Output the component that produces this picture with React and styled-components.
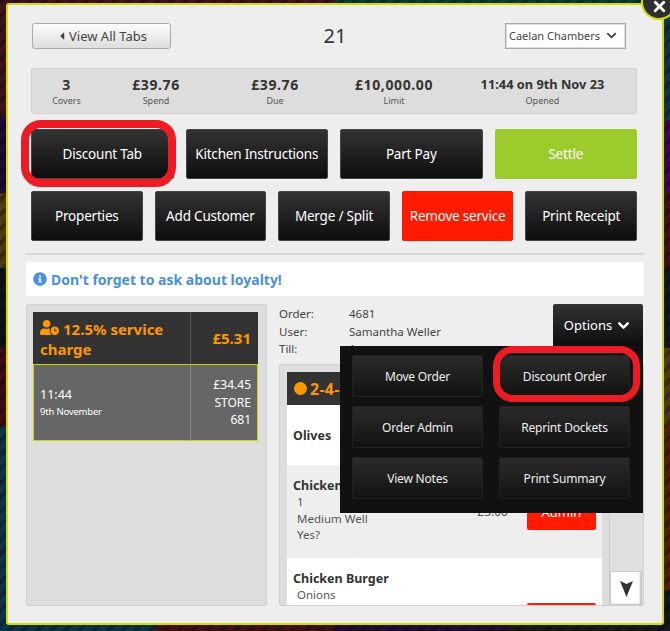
import React from "react";
import styled, { createGlobalStyle } from "styled-components";
import { ChevronDown, X } from "lucide-react";
import { FaUserClock, FaInfoCircle, FaCaretLeft } from "react-icons/fa";

const Global = createGlobalStyle`
  html, body { margin: 0; padding: 0; background: #111; }
  * { box-sizing: border-box; }
  body { font-family: "Noto Sans", "Liberation Sans", sans-serif; color: #444; }
`;

const Page = styled.div`
  width: 670px;
  height: 631px;
  overflow: hidden;
  padding: 3px 6px 6px 6px;
  background-color: #111;
  background-image:
    repeating-linear-gradient(135deg, rgba(0,0,0,.28) 0 4px, transparent 4px 10px),
    linear-gradient(to right, #3e1216 0 335px, #0e3a2a 335px),
    linear-gradient(to right, #0c3444 0 155px, #3e1014 155px 335px, #200c36 335px 510px, #181818 510px),
    linear-gradient(to bottom, #3e1216 0 117px, #1e0a34 117px 193px, #4c3a10 193px 268px, #111 268px 348px, #3e0c10 348px 427px, #0c3444 427px),
    linear-gradient(to bottom, #0e3a2e 0 120px, #3a0c40 120px 193px, #3a1414 193px 268px, #161616 268px 348px, #4c3c0c 348px 425px, #4a2008 425px 590px, #161616 590px);
  background-size: 100% 100%, 100% 4px, 100% 7px, 7px 100%, 7px 100%;
  background-position: 0 0, 0 0, 0 100%, 0 0, 100% 0;
  background-repeat: no-repeat;
`;

const Modal = styled.div`
  position: relative;
  height: 622px;
  background: #eee;
  border: 2px solid #d4dc00;
  border-radius: 3px;
  padding: 17px 18px 17px 18px;
`;

const Close = styled.div`
  position: absolute;
  top: -21px;
  right: -15px;
  width: 36px;
  height: 36px;
  border-radius: 50%;
  background: #2e2e2e;
  border: 2px solid #d4dc00;
  color: #fff;
  display: flex;
  align-items: center;
  justify-content: center;
  padding-top: 9px;
`;

const Inset = styled.div`
  padding: 0 7px 0 5px;
`;

const Header = styled.div`
  display: grid;
  grid-template-columns: 139px 1fr 121px;
  align-items: center;
  height: 26px;
  padding-left: 1px;
  padding-right: 11px;
`;

const BackButton = styled.div`
  height: 26px;
  border: 1px solid #aaa;
  border-radius: 3px;
  background: linear-gradient(#fdfdfd, #ddd);
  display: flex;
  align-items: center;
  justify-content: center;
  font-size: 13px;
  color: #444;
  gap: 1px;
`;

const TabNumber = styled.div`
  text-align: center;
  font-size: 20px;
  color: #333;
  padding-right: 6px;
`;

const CustomerSelect = styled.div`
  height: 26px;
  background: #fff;
  border: 1px solid #aaa;
  outline: 1px solid #ddd;
  outline-offset: -2px;
  display: flex;
  align-items: center;
  justify-content: space-between;
  padding: 0 6px 0 3px;
  font-size: 11px;
  white-space: nowrap;
  color: #444;
`;

const Stats = styled.div`
  margin-top: 20px;
  height: 46px;
  background: #ddd;
  border: 1px solid #d2d2d2;
  border-radius: 2px;
  display: grid;
  grid-template-columns: 69px 110px 128px 110px 1fr;
  align-items: start;
  padding-top: 7px;
  text-align: center;
`;

const StatValue = styled.div`
  font-size: ${p => (p.$small ? 12.8 : 14)}px;
  line-height: 17px;
  margin-bottom: 2px;
  font-weight: 700;
  color: #333;
  letter-spacing: ${p => (p.$small ? "0" : ".6px")};
`;

const StatLabel = styled.div`
  font-size: 9px;
  line-height: 12px;
  color: #555;
`;

const ButtonRow = styled.div`
  display: grid;
  grid-template-columns: repeat(${p => p.$cols}, 1fr);
  gap: 12px;
  margin-top: ${p => p.$top}px;
`;

const ActionButton = styled.div`
  position: relative;
  height: 50px;
  border-radius: 2px;
  display: flex;
  align-items: center;
  justify-content: center;
  font-size: 13.5px;
  letter-spacing: -.2px;
  color: #fff;
  white-space: nowrap;
  background: ${p => (p.$tone === "green" ? "#9ccc2c" : p.$tone === "red" ? "#ff1a00" : "linear-gradient(#333, #0d0d0d)")};
  border: 1px solid ${p => (p.$tone === "green" ? "#9ccc2c" : p.$tone === "red" ? "#ff1a00" : "#444")};
`;

const Ring = styled.span`
  position: absolute;
  top: ${p => p.$t}px;
  left: ${p => p.$l}px;
  right: ${p => p.$r}px;
  bottom: ${p => p.$b}px;
  border: ${p => p.$w}px solid #ed1c24;
  border-radius: 20px;
  pointer-events: none;
`;

const Divider = styled.div`
  margin-top: 12px;
  height: 2px;
  background: #d6d6d6;
`;

const Loyalty = styled.div`
  margin-top: 7px;
  height: 34px;
  background: #fff;
  display: flex;
  align-items: center;
  gap: 4px;
  padding-left: 7px;
  font-size: 14px;
  font-weight: 700;
  color: #4a90d9;
`;

const Main = styled.div`
  margin-top: 8px;
  display: grid;
  grid-template-columns: 241px 1fr;
  column-gap: 12px;
  height: 302px;
`;

const LeftPanel = styled.div`
  background: #ddd;
  border: 1px solid #d0d0d0;
  border-radius: 2px;
  padding: 7px 8px 7px 6px;
`;

const ChargeGrid = styled.div`
  display: grid;
  grid-template-columns: 157px 1fr;
`;

const ChargeHead = styled.div`
  background: #333;
  color: #ff9800;
  font-weight: 700;
  height: 52px;
  display: flex;
  align-items: center;
  padding: 0 7px;
  font-size: 15px;
  line-height: 20px;
  ${p => p.$price && "border-left: 1px solid #555; justify-content: flex-end;"}
`;

const ChargeTitle = styled.div``;

const ChargeIcon = styled(FaUserClock)`
  vertical-align: -2px;
  margin-right: 4px;
`;

const ChargeCell = styled.div`
  background: #666;
  color: #fff;
  height: 77px;
  border-top: 1.5px solid #c8d400;
  border-bottom: 1.5px solid #c8d400;
  display: flex;
  flex-direction: column;
  justify-content: center;
  padding: 0 6px;
  ${p => (p.$right
    ? "border-right: 1.5px solid #c8d400; border-left: 1px solid #888; align-items: flex-end; font-size: 12px; line-height: 17.5px;"
    : "border-left: 1.5px solid #c8d400;")}
`;

const ChargeTime = styled.div`
  font-size: 12.5px;
  line-height: 18px;
`;

const ChargeDate = styled.div`
  font-size: 9.5px;
  line-height: 15px;
  letter-spacing: -.2px;
`;

const RightColumn = styled.div`
  display: flex;
  flex-direction: column;
`;

const OrderHead = styled.div`
  position: relative;
  height: 60px;
  padding-right: 1px;
  display: flex;
  justify-content: space-between;
  align-items: flex-start;
`;

const OrderInfo = styled.div`
  display: grid;
  grid-template-columns: 70px auto;
  font-size: 11.5px;
  line-height: 17.5px;
  color: #444;
  padding-top: 1px;
`;

const OptionsButton = styled.div`
  width: 90px;
  height: 42px;
  background: linear-gradient(#333, #0d0d0d);
  color: #fff;
  font-size: 13px;
  display: flex;
  align-items: center;
  justify-content: center;
  gap: 3px;
  border-radius: 2px 2px 0 0;
`;

const Menu = styled.div`
  position: absolute;
  z-index: 2;
  top: 42px;
  right: 1px;
  width: 303px;
  height: 167px;
  background: #111;
  padding: 9px 13px 14px 12px;
  display: grid;
  grid-template-columns: 131px 131px;
  grid-auto-rows: 42px;
  gap: 9px 16px;
`;

const MenuButton = styled.div`
  position: relative;
  background: linear-gradient(#2b2b2b, #121212);
  border: 1px solid #222;
  border-radius: 2px;
  color: #eee;
  font-size: 12px;
  letter-spacing: -.2px;
  display: flex;
  align-items: center;
  justify-content: center;
`;

const ItemsPanel = styled.div`
  height: 242px;
  background: #ddd;
  border: 1px solid #d0d0d0;
  border-radius: 2px;
  padding: 7px 0 0 7px;
  display: grid;
  grid-template-columns: 315px 33px;
  column-gap: 7px;
  overflow: hidden;
`;

const ItemList = styled.div`
  overflow: hidden;
  height: 234px;
`;

const OrderBand = styled.div`
  height: 33px;
  background: #333;
  color: #ff9800;
  font-weight: 700;
  font-size: 16px;
  letter-spacing: .3px;
  display: flex;
  align-items: center;
  gap: 3px;
  padding-left: 7px;
`;

const Dot = styled.span`
  width: 13px;
  height: 13px;
  border-radius: 50%;
  background: #ff9800;
`;

const Item = styled.div`
  min-height: ${p => p.$h}px;
  background: ${p => (p.$shade ? "#eee" : "#fff")};
  display: flex;
  align-items: center;
  justify-content: space-between;
  padding: 0 6px;
`;

const ItemText = styled.div`
  align-self: ${p => (p.$top ? "flex-start" : "center")};
  padding-top: ${p => (p.$top ? 12 : 0)}px;
`;

const ItemName = styled.div`
  font-size: 12.5px;
  line-height: 17px;
  font-weight: 700;
  color: #333;
`;

const ItemNote = styled.div`
  font-size: 11.5px;
  line-height: 16.5px;
  color: #555;
  padding-left: 4px;
`;

const ItemAction = styled.div`
  display: flex;
  align-items: center;
  gap: 19px;
  font-size: 12px;
  color: #555;
`;

const AdminButton = styled.div`
  width: 69px;
  height: 36px;
  background: #ff1a00;
  color: #fff;
  font-size: 13px;
  border-radius: 2px;
  display: flex;
  align-items: center;
  justify-content: center;
`;

const Scrollbar = styled.div`
  display: flex;
  flex-direction: column;
  justify-content: flex-end;
  border-left: 1px solid #ccc;
  margin-top: -7px;
  background: #e0e0e0;
`;

const ScrollArrow = styled.div`
  height: 35px;
  background: #fff;
  border: 1px solid #ccc;
  box-shadow: inset -1px -1px 2px #bbb;
  display: flex;
  align-items: center;
  justify-content: center;
  color: #333;
`;

const mainButtons = [
  { label: "Kitchen Instructions" },
  { label: "Part Pay" },
  { label: "Settle", tone: "green" },
];
const secondButtons = [
  { label: "Properties" },
  { label: "Add Customer" },
  { label: "Merge / Split" },
  { label: "Remove service", tone: "red" },
  { label: "Print Receipt" },
];

export default function App() {
  return (
    <Page>
      <Global />
      <Modal>
        <Close><X size={17} strokeWidth={4} /></Close>
        <Inset>
          <Header>
            <BackButton><FaCaretLeft size={12} />View All Tabs</BackButton>
            <TabNumber>21</TabNumber>
            <CustomerSelect>Caelan Chambers<ChevronDown size={15} strokeWidth={3} /></CustomerSelect>
          </Header>
          <Stats>
            <div><StatValue>3</StatValue><StatLabel>Covers</StatLabel></div>
            <div><StatValue>£39.76</StatValue><StatLabel>Spend</StatLabel></div>
            <div><StatValue>£39.76</StatValue><StatLabel>Due</StatLabel></div>
            <div><StatValue>£10,000.00</StatValue><StatLabel>Limit</StatLabel></div>
            <div><StatValue $small>11:44 on 9th Nov 23</StatValue><StatLabel>Opened</StatLabel></div>
          </Stats>
          <ButtonRow $cols={4} $top={15}>
            <ActionButton>
              Discount Tab
              <Ring $w={8} $t={-10} $l={-11} $r={-3} $b={-9} />
            </ActionButton>
            {mainButtons.map(b => <ActionButton key={b.label} $tone={b.tone}>{b.label}</ActionButton>)}
          </ButtonRow>
          <ButtonRow $cols={5} $top={12}>
            {secondButtons.map(b => <ActionButton key={b.label} $tone={b.tone}>{b.label}</ActionButton>)}
          </ButtonRow>
        </Inset>
        <Divider />
        <Loyalty><FaInfoCircle size={14} color="#4a90e2" />Don't forget to ask about loyalty!</Loyalty>
        <Main>
          <LeftPanel>
            <ChargeGrid>
              <ChargeHead>
                <ChargeTitle><ChargeIcon size={19} />12.5% service charge</ChargeTitle>
              </ChargeHead>
              <ChargeHead $price>£5.31</ChargeHead>
              <ChargeCell>
                <ChargeTime>11:44</ChargeTime>
                <ChargeDate>9th November</ChargeDate>
              </ChargeCell>
              <ChargeCell $right>
                <div>£34.45</div>
                <div>STORE</div>
                <div>681</div>
              </ChargeCell>
            </ChargeGrid>
          </LeftPanel>
          <RightColumn>
            <OrderHead>
              <OrderInfo>
                <span>Order:</span><span>4681</span>
                <span>User:</span><span>Samantha Weller</span>
                <span>Till:</span><span>1</span>
              </OrderInfo>
              <OptionsButton>Options<ChevronDown size={17} strokeWidth={3.5} /></OptionsButton>
              <Menu>
                <MenuButton>Move Order</MenuButton>
                <MenuButton>
                  Discount Order
                  <Ring $w={7} $t={-10} $l={-7} $r={-11} $b={-6} />
                </MenuButton>
                <MenuButton>Order Admin</MenuButton>
                <MenuButton>Reprint Dockets</MenuButton>
                <MenuButton>View Notes</MenuButton>
                <MenuButton>Print Summary</MenuButton>
              </Menu>
            </OrderHead>
            <ItemsPanel>
              <ItemList>
                <OrderBand><Dot />2-4-1</OrderBand>
                <Item $h={60}>
                  <ItemText><ItemName>Olives</ItemName></ItemText>
                </Item>
                <Item $h={93} $shade>
                  <ItemText $top>
                    <ItemName>Chicken Burger</ItemName>
                    <ItemNote>1</ItemNote>
                    <ItemNote>Medium Well</ItemNote>
                    <ItemNote>Yes?</ItemNote>
                  </ItemText>
                  <ItemAction>£5.00<AdminButton>Admin</AdminButton></ItemAction>
                </Item>
                <Item $h={126}>
                  <ItemText $top>
                    <ItemName>Chicken Burger</ItemName>
                    <ItemNote>Onions</ItemNote>
                  </ItemText>
                  <ItemAction><AdminButton /></ItemAction>
                </Item>
              </ItemList>
              <Scrollbar>
                <ScrollArrow>
                  <svg width="13" height="16" viewBox="0 0 13 16"><path d="M0 0 L6.5 3 L13 0 L6.5 16 Z" fill="#333" /></svg>
                </ScrollArrow>
              </Scrollbar>
            </ItemsPanel>
          </RightColumn>
        </Main>
      </Modal>
    </Page>
  );
}
